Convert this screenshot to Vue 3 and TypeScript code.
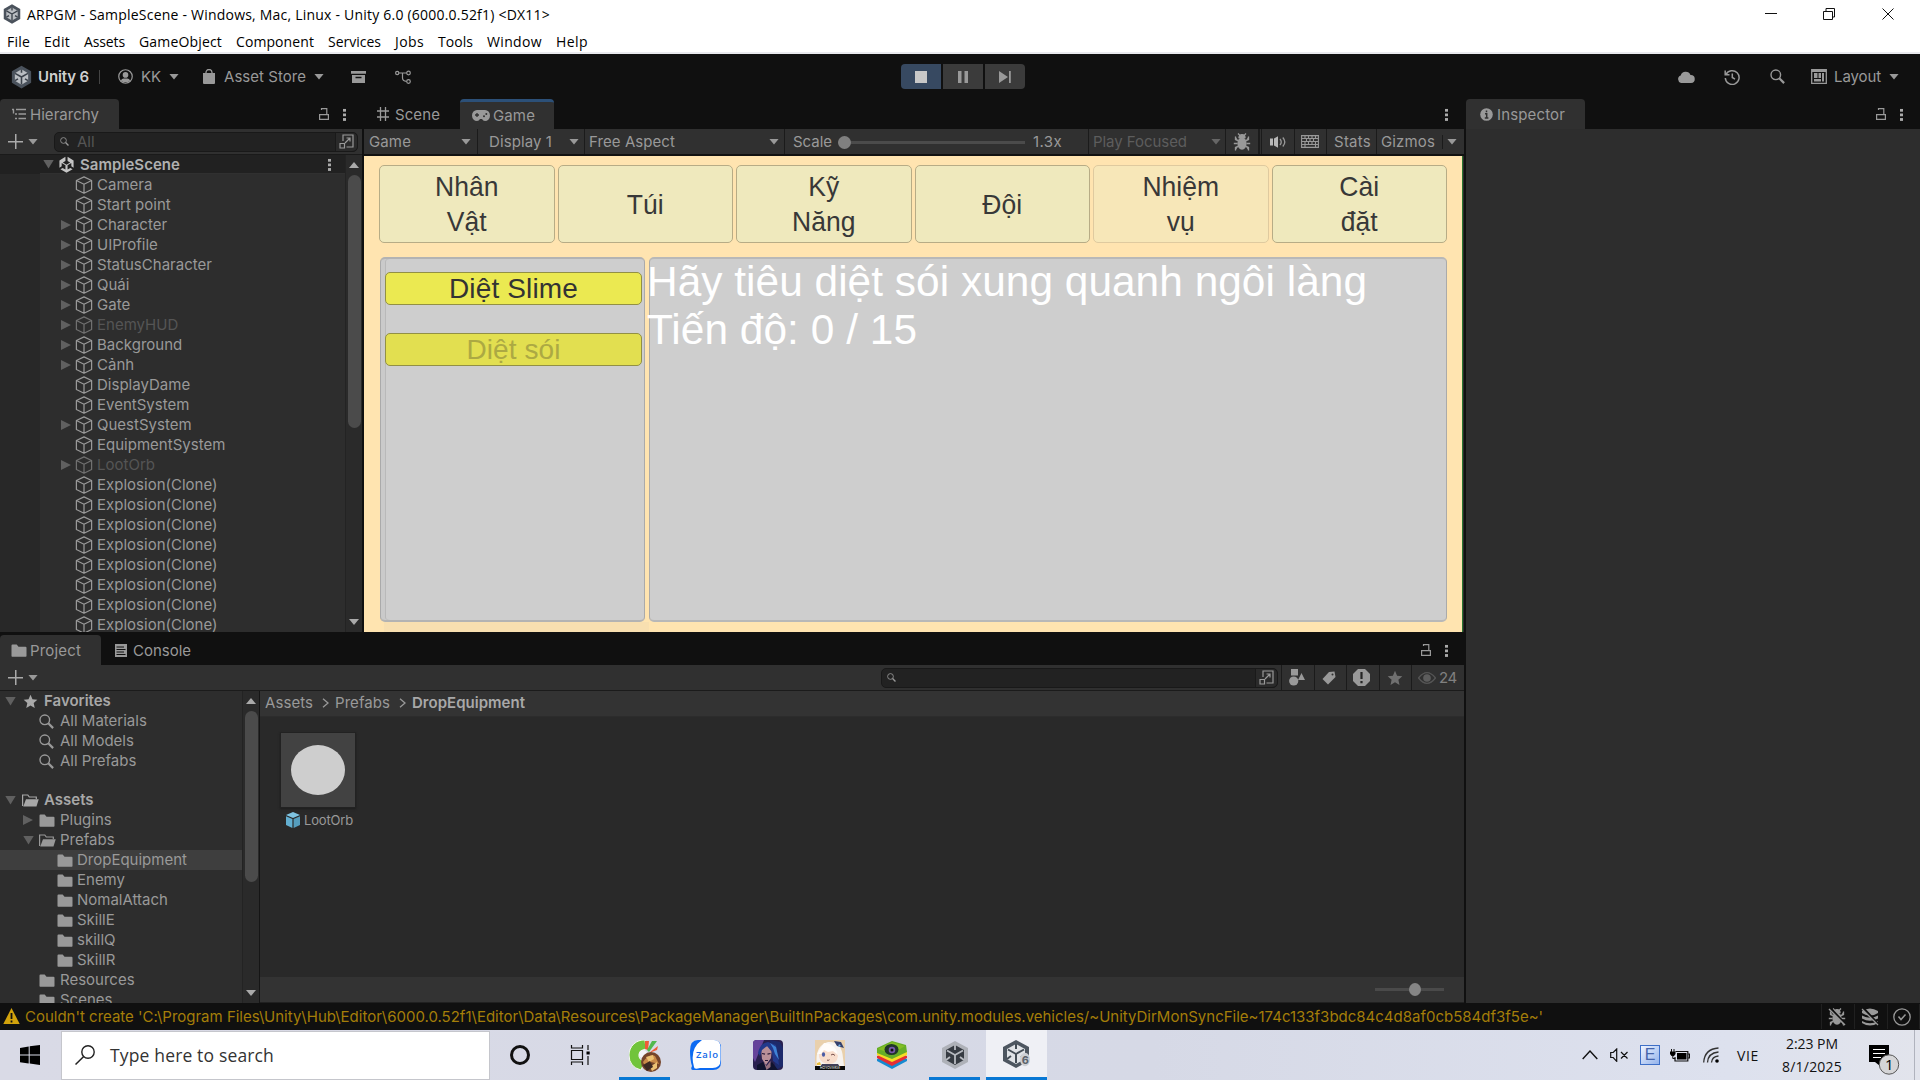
<script setup lang="ts">
import type { Directive } from 'vue'

// Tracks a label so that it occupies exactly the given width in pixels.
const vFit: Directive<HTMLElement, number> = {
  mounted(el, binding) {
    const count = (el.textContent ?? '').trim().length
    const natural = el.getBoundingClientRect().width
    el.style.letterSpacing = `${(binding.value - natural) / count}px`
    el.style.width = `${binding.value}px`
  },
}

interface MenuEntry { label: string; width: number }
const menu: MenuEntry[] = [
  { label: 'File', width: 23 }, { label: 'Edit', width: 26 }, { label: 'Assets', width: 41 },
  { label: 'GameObject', width: 83 }, { label: 'Component', width: 78 }, { label: 'Services', width: 53 },
  { label: 'Jobs', width: 29 }, { label: 'Tools', width: 35 }, { label: 'Window', width: 55 }, { label: 'Help', width: 32 },
]

interface SceneNode { name: string; fold?: boolean; off?: boolean }
const nodes: SceneNode[] = [
  { name: 'Camera' }, { name: 'Start point' }, { name: 'Character', fold: true }, { name: 'UIProfile', fold: true },
  { name: 'StatusCharacter', fold: true }, { name: 'Quái', fold: true }, { name: 'Gate', fold: true },
  { name: 'EnemyHUD', fold: true, off: true }, { name: 'Background', fold: true }, { name: 'Cảnh', fold: true },
  { name: 'DisplayDame' }, { name: 'EventSystem' }, { name: 'QuestSystem', fold: true }, { name: 'EquipmentSystem' },
  { name: 'LootOrb', fold: true, off: true },
  ...Array.from({ length: 8 }, () => ({ name: 'Explosion(Clone)' })),
]

interface GameTab { lines: string[]; active?: boolean }
const gameTabs: GameTab[] = [
  { lines: ['Nhân', 'Vật'] }, { lines: ['Túi'] }, { lines: ['Kỹ', 'Năng'] },
  { lines: ['Đội'] }, { lines: ['Nhiệm', 'vụ'], active: true }, { lines: ['Cài', 'đặt'] },
]

interface Folder { name: string; level: number; icon: string; fold?: 'open' | 'closed'; bold?: boolean; selected?: boolean }
const favorites: Folder[] = [
  { name: 'Favorites', level: 0, icon: 'star', fold: 'open', bold: true },
  { name: 'All Materials', level: 1, icon: 'search' },
  { name: 'All Models', level: 1, icon: 'search' },
  { name: 'All Prefabs', level: 1, icon: 'search' },
]
const folders: Folder[] = [
  { name: 'Assets', level: 0, icon: 'folder-open', fold: 'open', bold: true },
  { name: 'Plugins', level: 1, icon: 'folder', fold: 'closed' },
  { name: 'Prefabs', level: 1, icon: 'folder-open', fold: 'open' },
  { name: 'DropEquipment', level: 2, icon: 'folder', selected: true },
  { name: 'Enemy', level: 2, icon: 'folder' },
  { name: 'NomalAttach', level: 2, icon: 'folder' },
  { name: 'SkillE', level: 2, icon: 'folder' },
  { name: 'skillQ', level: 2, icon: 'folder' },
  { name: 'SkillR', level: 2, icon: 'folder' },
  { name: 'Resources', level: 1, icon: 'folder' },
  { name: 'Scenes', level: 1, icon: 'folder' },
]
const warning = "Couldn't create 'C:\\Program Files\\Unity\\Hub\\Editor\\6000.0.52f1\\Editor\\Data\\Resources\\PackageManager\\BuiltInPackages\\com.unity.modules.vehicles/~UnityDirMonSyncFile~174c133f3bdc84c4d8af0cb584df3f5e~'"
</script>

<template>
  <div class="screen">
    <svg class="defs" width="0" height="0">
      <symbol id="unity" viewBox="0 0 24 26">
        <path d="M12 0 23 6.4v13.2L12 26 1 19.6V6.4z" fill="#4a525c" />
        <path d="M12 4.2 19.6 8.6v8.8L12 21.8 4.4 17.4V8.6z" fill="#b9bdc2" />
        <path d="M12 13v8.5M12 13 4.6 8.8M12 13l7.4-4.2M12 4.2v4M4.6 17.2l3.4-2M19.4 17.2l-3.4-2" stroke="#3b424b" stroke-width="1.8" fill="none" />
      </symbol>
      <symbol id="scene" viewBox="0 0 24 24">
        <path d="M10.5 1.2v6L6.8 9.3l5.2 3 5.2-3-3.7-2.1v-6L22 6.3v10.2l-3.2-1.9V10L13.5 13v6.2l3.9-2.3 3.2 1.9L12 23.6l-8.6-4.8 3.2-1.9 3.9 2.3V13L5.200 10v4.600L2 16.500V6.300z" fill="#c4c4c4" />
      </symbol>
      <symbol id="cube" viewBox="0 0 18 18">
        <path d="M9 .9 16.600 4.500v9L9 17.200 1.400 13.500v-9zM1.400 4.500 9 8.200l7.600-3.700M9 8.200v9" fill="none" stroke="currentColor" stroke-width="1.250" stroke-linejoin="round" />
      </symbol>
      <symbol id="lock" viewBox="0 0 10 12">
        <path d="M.6 6.600h8.800v4.800H.6zM2.500 2V.7h5.300v5.800" fill="none" stroke="currentColor" stroke-width="1.200" />
      </symbol>
      <symbol id="search" viewBox="0 0 15 15">
        <circle cx="5.800" cy="5.800" r="4.800" fill="none" stroke="currentColor" stroke-width="1.400" />
        <path d="m9.300 9.300 4.800 4.800" stroke="currentColor" stroke-width="2.200" />
      </symbol>
      <symbol id="folder" viewBox="0 0 16 13">
        <path d="M.5 1.500Q.5.500 1.500.500h4.200L7.500 2.700h7Q15.500 2.700 15.500 3.700v8.300q0 .700-.700.700H1.200q-.700 0-.700-.700z" fill="currentColor" />
      </symbol>
      <symbol id="folder-open" viewBox="0 0 17 13">
        <path d="M.600 12V1h5.200l1.500 2h7v2" fill="none" stroke="currentColor" stroke-width="1.200" />
        <path d="M4 5.300h12.700l-2.200 7.200H1.200z" fill="currentColor" />
      </symbol>
      <symbol id="star" viewBox="0 0 16 16">
        <path d="m8 .800 2.100 4.900 5.200.5-3.900 3.500 1.100 5.200L8 12.200l-4.500 2.700 1.100-5.200L.700 6.200l5.200-.5z" fill="currentColor" />
      </symbol>
      <symbol id="expand" viewBox="0 0 15 15">
        <path d="M4 7V1h10v12H7.500" fill="none" stroke="currentColor" stroke-width="1.200" />
        <path d="M1 9.500h4.500V14H1zM6 9l5-5M7.500 4H11v3.500" fill="none" stroke="currentColor" stroke-width="1.200" />
      </symbol>
      <symbol id="bug" viewBox="0 0 18 18">
        <ellipse cx="9" cy="10.500" rx="4.600" ry="6.200" fill="currentColor" />
        <path d="M6 4.600a3 3 0 0 1 6 0zM6.500 2 5 .500M11.500 2 13 .500M5.500 8 2.500 6.500V3.500M12.500 8l3-1.500V3.500M4.500 10.500H.8M13.500 10.500h3.700M5.500 13l-3 1.500v3M12.500 13l3 1.500v3" fill="currentColor" stroke="currentColor" stroke-width="1.300" />
      </symbol>
    </svg>

    <header class="titlebar">
      <svg class="title-logo"><use href="#unity" /></svg>
      <span v-fit="523" class="title-text">ARPGM - SampleScene - Windows, Mac, Linux - Unity 6.0 (6000.0.52f1) &lt;DX11&gt;</span>
      <svg class="win-controls" viewBox="0 0 130 12">
        <path d="M0 5.500h12M58.500 3.500h9v8h-9zM61 3V.5h8.500V9H68M117.500.500l11 11M128.500.500l-11 11" fill="none" stroke="#111" />
      </svg>
    </header>
    <nav class="menubar"><span v-for="m in menu" :key="m.label" v-fit="m.width">{{ m.label }}</span></nav>

    <div class="toolbar">
      <svg class="logo"><use href="#unity" /></svg>
      <b v-fit="51" class="brand">Unity 6</b>
      <i class="rule" />
      <svg class="user" viewBox="0 0 16 16"><circle cx="8" cy="8" r="7.200" fill="none" stroke="currentColor" stroke-width="1.300" /><circle cx="8" cy="6.300" r="3" fill="currentColor" /><path d="M3 12.500q1-2.500 3-2.500h4q2 0 3 2.500-5 3.500-10 0z" fill="currentColor" /></svg>
      <span v-fit="20" class="kk">KK</span><i class="tri tri-kk" />
      <svg class="bag" viewBox="0 0 12 15"><path d="M0 4h12v10q0 1-1 1H1q-1 0-1-1z" fill="currentColor" /><path d="M3 6V3.500a3 3 0 0 1 6 0V6" fill="none" stroke="currentColor" stroke-width="1.300" /></svg>
      <span v-fit="82" class="store">Asset Store</span><i class="tri tri-store" />
      <svg class="box" viewBox="0 0 15 12"><path d="M0 0h15v2.800H0zM1 4h13v8H1z" fill="currentColor" /><path d="M4.500 6.500h6" stroke="#101010" stroke-width="1.500" /></svg>
      <svg class="branch" viewBox="0 0 16 14"><g fill="none" stroke="currentColor" stroke-width="1.200"><circle cx="2.200" cy="3" r="1.600" /><circle cx="13.500" cy="3" r="1.800" /><circle cx="13.500" cy="11.500" r="1.800" /><path d="M4 3h7.500M7.500 3v5q0 3 4 3.300" /></g></svg>
      <div class="play">
        <span class="on"><svg viewBox="0 0 12 12"><path d="M0 0h12v12H0z" fill="#c8c8c8" /></svg></span>
        <span><svg viewBox="0 0 12 12"><path d="M1 0h3.500v12H1zM7.500 0H11v12H7.500z" fill="currentColor" /></svg></span>
        <span><svg viewBox="0 0 12 12"><path d="M0 0l9 6-9 6zM10 0h1.800v12H10z" fill="currentColor" /></svg></span>
      </div>
      <svg class="cloud" viewBox="0 0 18 12"><path d="M4 12a4 4 0 0 1-.3-7.600A5.200 5.200 0 0 1 13.500 4 4 4 0 0 1 14 12z" fill="currentColor" /></svg>
      <svg class="history" viewBox="0 0 16 16"><path d="M2 5.500A6.900 6.900 0 1 1 1.300 9M1.200 1.500v4.300h4.300M8.300 4.500v4l2.700 1.600" fill="none" stroke="currentColor" stroke-width="1.500" /></svg>
      <svg class="find"><use href="#search" /></svg>
      <svg class="layout-icon" viewBox="0 0 16 15"><path d="M.7.7h14.600v13.600H.7z" fill="none" stroke="currentColor" stroke-width="1.300" /><path d="M3 4h3.500v5H3zM7.500 4h2.500v5H7.500zM11 4h2v8.500h-2zM3 10h7v2.500H3zM1 1h14v2H1z" fill="currentColor" /></svg>
      <span v-fit="47" class="layout">Layout</span><i class="tri tri-layout" />
    </div>

    <main class="workspace">
      <div class="docks">
        <div class="upper">
          <section class="hierarchy">
            <div class="tabs">
              <div class="tab tab-hier">
                <svg class="list" viewBox="0 0 14 12"><path d="M0 1.500h2M4 1.500h10M3 6h2M6.500 6H14M3 10.500h2M6.500 10.500H14M1.500 1.500v4" stroke="currentColor" stroke-width="1.400" fill="none" /></svg>
                <span v-fit="69">Hierarchy</span>
              </div>
              <svg class="lock lock-hier"><use href="#lock" /></svg><i class="kebab" />
            </div>
            <div class="panelbar">
              <i class="plus" /><i class="tri tri-plus" />
              <div class="field field-hier">
                <svg class="mini-search"><use href="#search" /></svg><span class="hint">All</span>
                <div class="field-btn"><svg><use href="#expand" /></svg></div>
              </div>
            </div>
            <div class="tree">
              <div class="gutter" />
              <div class="nodes">
                <div class="node root"><i class="arrow open" /><svg class="scene-icon"><use href="#scene" /></svg><b v-fit="100">SampleScene</b><i class="kebab root-kebab" /></div>
                <div v-for="(n, i) in nodes" :key="i" class="node" :class="{ off: n.off }">
                  <i class="arrow" :class="n.fold ? 'closed' : 'none'" /><svg class="cube-icon"><use href="#cube" /></svg><span>{{ n.name }}</span>
                </div>
              </div>
              <div class="scroll"><i class="up" /><i class="thumb thumb-hier" /><i class="down" /></div>
            </div>
          </section>

          <section class="game">
            <div class="tabs">
              <svg class="hash" viewBox="0 0 12 14"><path d="M3.500 0v14M8.500 0v14M0 4h12M0 10h12" stroke="currentColor" stroke-width="1.300" /></svg>
              <span v-fit="45" class="scene-label">Scene</span>
              <div class="tab tab-game">
                <svg class="pad" viewBox="0 0 18 11"><path d="M5 0h8a5 5.500 0 0 1 0 11q-2 0-3-2H8q-1 2-3 2A5 5.500 0 0 1 5 0z" fill="currentColor" /><path d="M3 5h4M5 3v4" stroke="#303030" stroke-width="1.300" /><circle cx="12" cy="6.300" r="1" fill="#303030" /><circle cx="14.300" cy="4" r="1" fill="#303030" /></svg>
                <span v-fit="42">Game</span>
              </div>
              <i class="kebab kebab-game" />
            </div>
            <div class="gamebar">
              <div class="cell c-game"><span v-fit="42">Game</span><i class="tri" /></div>
              <div class="cell c-display"><span v-fit="63">Display 1</span><i class="tri" /></div>
              <div class="cell c-aspect"><span v-fit="86">Free Aspect</span><i class="tri" /></div>
              <div class="cell c-scale"><span v-fit="39">Scale</span><div class="slider"><i /></div><span v-fit="29">1.3x</span></div>
              <div class="cell c-focus"><span v-fit="94">Play Focused</span><i class="tri" /></div>
              <div class="cell c-bug"><svg><use href="#bug" /></svg></div>
              <div class="cell c-sound"><svg viewBox="0 0 17 12"><path d="M0 2.500h3v7H0zM4 2.500 8 .3v11.400L4 9.500z" fill="#b8b8b8" /><path d="M10 3q2.500 3 0 6M12.800 1.500q4 4.500 0 9" fill="none" stroke="currentColor" stroke-width="1.300" /></svg></div>
              <div class="cell c-keys"><svg viewBox="0 0 18 13"><path d="M.6.6h16.800v11.800H.6zM.6 3.500h16.800M.6 6.500h16.800M.6 9.500h16.800M4 .6v3M7.500.6v3M11 .6v3M14.500.6v3M5.500 3.500v3M9 3.500v3M12.500 3.500v3M4 6.500v6M7.500 6.500v3M11 6.500v3M14.500 6.500v6" fill="none" stroke="currentColor" stroke-width="1.100" /></svg></div>
              <div class="cell c-stats"><span v-fit="37">Stats</span></div>
              <div class="cell c-gizmos"><span v-fit="54">Gizmos</span><i class="rule" /><i class="tri" /></div>
            </div>
            <div class="viewport">
              <div class="game-tabs">
                <div v-for="t in gameTabs" :key="t.lines[0]" class="game-btn" :class="{ active: t.active }">
                  <span v-for="l in t.lines" :key="l">{{ l }}</span>
                </div>
              </div>
              <div class="game-body">
                <div class="quests">
                  <div class="quest"><span v-fit="129">Diệt Slime</span></div>
                  <div class="quest dim"><span v-fit="94">Diệt sói</span></div>
                </div>
                <div class="detail">
                  <span v-fit="720">Hãy tiêu diệt sói xung quanh ngôi làng</span>
                  <span v-fit="270">Tiến độ: 0 / 15</span>
                </div>
              </div>
              <div class="strip" />
            </div>
          </section>
        </div>

        <section class="project">
          <div class="tabs tabs-project">
            <div class="tab tab-project"><svg class="fold"><use href="#folder" /></svg><span v-fit="51">Project</span></div>
            <svg class="console-icon" viewBox="0 0 12 13"><path d="M0 0h12v13H0z" fill="currentColor" /><path d="M1.500 3H9M1.500 5.500h9M1.500 8H9M1.500 10.500h9" stroke="#101010" stroke-width="1.100" /></svg>
            <span v-fit="58" class="console-label">Console</span>
            <svg class="lock lock-project"><use href="#lock" /></svg><i class="kebab" />
          </div>
          <div class="projectbar">
            <i class="plus" /><i class="tri tri-plus" />
            <div class="field field-project"><svg class="mini-search"><use href="#search" /></svg><div class="field-btn"><svg><use href="#expand" /></svg></div></div>
            <div class="tool t1"><svg viewBox="0 0 16 17"><path d="M2 0h7v6.500H2zM12.500 4 16 11H9z" fill="currentColor" /><circle cx="4.700" cy="12" r="4.600" fill="currentColor" /></svg></div>
            <div class="tool t2"><svg viewBox="0 0 14 14"><path d="M7 1 12.500.500 13.500 6 6 13.500.500 8z" fill="currentColor" /><circle cx="10.500" cy="3.500" r="1" fill="#303030" /></svg></div>
            <div class="tool t3"><svg viewBox="0 0 17 17"><path d="M5 0h7l5 5v7l-5 5H5l-5-5V5z" fill="currentColor" /><path d="M8.500 3v7M8.500 12v2.200" stroke="#252525" stroke-width="2.200" /></svg></div>
            <div class="tool t4"><svg><use href="#star" /></svg></div>
            <div class="tool t5"><svg viewBox="0 0 17 11"><path d="M.5 5.500q8-10 16 0-8 10-16 0z" fill="none" stroke="#555" stroke-width="1.200" /><circle cx="8.500" cy="5.500" r="3.600" fill="#5d5d5d" /></svg><span v-fit="18">24</span></div>
          </div>
          <div class="project-body">
            <div class="folders">
              <div v-for="f in favorites" :key="f.name" class="folder" :class="[`lv${f.level}`, { bold: f.bold }]">
                <i class="arrow" :class="f.fold ?? 'none'" /><svg :class="`ic-${f.icon}`"><use :href="`#${f.icon}`" /></svg><span>{{ f.name }}</span>
              </div>
              <div class="folder-gap" />
              <div v-for="f in folders" :key="f.name" class="folder" :class="[`lv${f.level}`, { bold: f.bold, selected: f.selected }]">
                <i class="arrow" :class="f.fold ?? 'none'" /><svg :class="`ic-${f.icon}`"><use :href="`#${f.icon}`" /></svg><span>{{ f.name }}</span>
              </div>
            </div>
            <div class="scroll"><i class="up" /><i class="thumb thumb-project" /><i class="down" /></div>
            <div class="content">
              <div class="crumbs">
                <span v-fit="48">Assets</span><svg viewBox="0 0 7 10"><path d="m1 .8 5 4.200-5 4.200" fill="none" stroke="currentColor" stroke-width="1.300" /></svg>
                <span v-fit="55">Prefabs</span><svg viewBox="0 0 7 10"><path d="m1 .8 5 4.200-5 4.200" fill="none" stroke="currentColor" stroke-width="1.300" /></svg>
                <b v-fit="113">DropEquipment</b>
              </div>
              <div class="assets">
                <div class="asset">
                  <div class="thumb-box"><i /></div>
                  <div class="asset-name">
                    <svg viewBox="0 0 14 16"><path d="M7 0 14 3 7 6 0 3z" fill="#7fc4e2" /><path d="M0 4.200 6.400 7v9L0 13z" fill="#62aed0" /><path d="M14 4.200 7.600 7v9L14 13z" fill="#559dbd" /></svg>
                    <span v-fit="49">LootOrb</span>
                  </div>
                </div>
              </div>
              <div class="zoombar"><div><i /></div></div>
            </div>
          </div>
        </section>
      </div>

      <aside class="inspector">
        <div class="tabs">
          <div class="tab tab-insp"><svg viewBox="0 0 13 13"><circle cx="6.500" cy="6.500" r="6.300" fill="currentColor" /><path d="M6.500 2.500v1.800M5 5.800h1.700v3.700M4.800 9.900h3.600" stroke="#303030" stroke-width="1.500" fill="none" /></svg><span v-fit="68">Inspector</span></div>
          <svg class="lock lock-insp"><use href="#lock" /></svg><i class="kebab" />
        </div>
      </aside>
    </main>

    <footer class="status">
      <svg class="warn" viewBox="0 0 17 17"><path d="M8.500.500 16.700 16.500H.3z" fill="#d3a30c" /><path d="M8.500 5.500v6M8.500 13v2" stroke="#111" stroke-width="1.800" /></svg>
      <span v-fit="1519" class="warning">{{ warning }}</span>
      <div class="st s1"><svg viewBox="0 0 18 18"><use href="#bug" /><path d="M2 0l16 17" stroke="#101010" stroke-width="2.500" /><path d="M1 1l16 16" stroke="currentColor" stroke-width="1.400" /></svg></div>
      <div class="st s2"><svg viewBox="0 0 18 18"><path d="M1 3q8-5 16 0v2q-8 5-16 0zM1 7.500q8 4.500 16 0v3q-8 4.500-16 0zM1 13q8 4.500 16 0v2q-8 5-16 0z" fill="currentColor" /><path d="M2 0l16 17" stroke="#101010" stroke-width="2.500" /><path d="M1 1l16 16" stroke="currentColor" stroke-width="1.300" /></svg></div>
      <div class="st s3"><svg viewBox="0 0 18 18"><circle cx="9" cy="9" r="8.200" fill="none" stroke="currentColor" stroke-width="1.300" /><path d="m5.500 8.500 2.500 3 4.500-5" fill="none" stroke="currentColor" stroke-width="1.500" /></svg></div>
    </footer>

    <div class="taskbar">
      <svg class="start" viewBox="0 0 20 20"><path d="M0 3 8.700 1.500v8H0zM9.700 1.300 20 0v9.500H9.700zM0 10.500h8.700v8L0 17.300zM9.700 10.500H20V20L9.700 18.600z" /></svg>
      <div class="searchbox">
        <svg viewBox="0 0 20 20"><circle cx="13" cy="7" r="6.200" fill="none" stroke="#222" stroke-width="1.400" /><path d="M8.700 11.500.500 19.500" stroke="#222" stroke-width="1.500" /></svg>
        <span v-fit="164">Type here to search</span>
      </div>
      <i class="cortana" />
      <svg class="taskview" viewBox="0 0 20 20"><path d="M1.500 5.500h11v9h-11zM1.500 0v3h11V0M1.500 20v-3h11v3M18 0v5M18 11v9" fill="none" stroke="#111" stroke-width="1.200" /><path d="M16.500 6.500h3.200v3h-3.200z" /></svg>
      <div class="app a1"><svg viewBox="0 0 32 32">
        <path d="M16 0A15 15 0 0 0 0 15q0 12 12 15l4-9q-7-1-6-7 1-4 7-5z" fill="#71c43b" stroke="#f5f7f1" stroke-width="1" />
        <path d="M16 1h4l-1 9-3-1z" fill="#ef5d35" /><path d="M23 1h5l-8 11-2-2z" fill="#51b94e" /><path d="M29 6l-1 4-8 3z" fill="#ef5d35" />
        <circle cx="14" cy="14" r="4" fill="#f4f5f8" /><circle cx="22" cy="22" r="10" fill="#75452b" /><path d="M14 22q6-9 12-6l4 8-8-2-5 7z" fill="#c98b48" /><path d="M17 17l7-2 1 4-5 3zM21 27l7-5v6l-5 3z" fill="#ecc274" /><path d="m14 25 7-4 3 6-6 4z" fill="#3c2923" />
      </svg></div>
      <div class="app a2"><svg viewBox="0 0 31 31"><path d="M8 0h15q8 0 8 8v14q0 8-8 8H3q-3 0-1-4Q0 20 0 11 0 0 8 0z" fill="#0c6af2" /><path d="M12 0h12q6 0 6.500 7v13q0 8-8 8H10q-6 2-6-1Q-1 9 12 0z" fill="#fff" /><text x="6" y="17.500" font-family="Open Sans, sans-serif" font-weight="600" font-size="9.500" textLength="22" fill="#1168e8">Zalo</text></svg></div>
      <div class="app a3"><svg viewBox="0 0 30 30"><rect width="30" height="30" rx="4" fill="#29204f" /><path d="M0 3q0-3 4-3h7L2 22l-2-4z" fill="#65439a" /><path d="M17 0l10 2 3 6v18l-7 4z" fill="#1d2a6b" /><path d="M8 9q6-5 11-2l-1 11-5 7-4-6z" fill="#b98f98" /><path d="M5 13Q7 3 15 2l8 3 3 20-6-4-1-9-5-6-5 4-2 6z" fill="#22398c" /><path d="m17 3 6 4 3 13-4-6-2-6z" fill="#3f83d6" /><path d="M9 13.500l3 .7M14.500 14.200l3-.7M12 20.500h3" stroke="#2b1a38" stroke-width="1.200" /><path d="m4 25 6-3 3 5 6-5 6 8H4z" fill="#10132e" /><path d="M10.500 21l3 5 4-5v6l-4 3z" fill="#96717f" /></svg></div>
      <div class="app a4"><svg viewBox="0 0 30 30"><path d="M0 0h30v30H0z" fill="#e9d0ac" /><path d="M2 26Q-1 6 13 2q14-1 15 16l1 8z" fill="#f7f3f0" /><path d="M4 12Q8 7 15 8t8 8q-1 8-9 8T4 17z" fill="#f8ddcc" /><path d="M2 14 9 3q11 0 14 12l-5-4-5 1-4-2-3 4z" fill="#fffcf9" /><path d="M19 1l7 1 3 6-7-2z" fill="#34406d" /><path d="M24 4l2 2-3 1z" fill="#7bb6e4" /><ellipse cx="8.500" cy="14.500" rx="1.600" ry="2.300" fill="#4a5ca5" /><path d="M16 15q2-2 4 .5M12 20q1 1 2.500-.3" stroke="#77504d" fill="none" /><path d="M7 24h16l2 3H5z" fill="#414058" /><path d="M2 23l3-1 1 3H2z" fill="#e9be3b" /><path d="M0 26h30v4H0z" fill="#090909" /><text x="5" y="29" font-size="3.200" font-family="Lato, sans-serif" fill="#fff" textLength="20">HOYOVERSE</text></svg></div>
      <div class="app a5"><svg viewBox="0 0 30 28"><path d="M0 18 15 12l15 6v2L15 28 0 20z" fill="#168ad1" /><path d="M0 15 15 9l15 6v2L15 25 0 17z" fill="#e52f35" /><path d="M0 12 15 6l15 5v3L15 21 0 14z" fill="#f5dd24" /><path d="M0 7 15 0l14 4 1 7-15 7L0 12z" fill="#67af26" /><path d="M1 8 15 1l13 4-13 8z" fill="#82bd25" /><ellipse cx="14.500" cy="8.500" rx="7" ry="5.500" fill="#213629" /><circle cx="15" cy="9" r="3.300" fill="#7559a9" /><circle cx="15" cy="9" r="1.500" fill="#111" /></svg></div>
      <div class="app a6"><svg viewBox="0 0 26 28"><path d="M13 0 26 7v14l-13 7L0 21V7z" fill="#aeb1b8" /><path d="M13 4 22 9v10l-9 5-9-5V9z" fill="#363b42" /><path d="M13 14v9M13 14 5 9.500M13 14l8-4.500M13 4v5M4 19l4-3M22 19l-4-3" stroke="#b7bac0" stroke-width="1.800" /></svg></div>
      <div class="app a7"><svg viewBox="0 0 27 28"><path d="M13 0 26 7v14l-13 7L0 21V7z" fill="#4d5660" /><path d="M13 4 22 9v10l-9 5-9-5V9z" fill="#e0e3e7" /><path d="M13 14v9M13 14 5 9.500M13 14l8-4.500M13 4v5M4 19l4-3M22 19l-4-3" stroke="#444d56" stroke-width="2" /><ellipse cx="22" cy="19.500" rx="5" ry="6.800" fill="#cdd0d5" /><text x="18.700" y="23.500" font-size="11" font-weight="700" font-family="Inter, sans-serif" fill="#5c636c">6</text></svg></div>

      <svg class="chev" viewBox="0 0 16 10"><path d="m.7 9 7.300-8 7.300 8" fill="none" stroke="#111" stroke-width="1.400" /></svg>
      <svg class="mute" viewBox="0 0 19 14"><path d="M.7 4.500h2.500L6.700 1v12.300L3.200 9.500H.7zM11 4l6.500 6.500M17.500 4 11 10.500" fill="none" stroke="#111" stroke-width="1.200" /></svg>
      <div class="ime">E</div>
      <svg class="battery" viewBox="0 0 20 13"><path d="M5.500 2.500h12.300V12H5v-4M18 5h1.500v4H18" fill="none" stroke="#111" stroke-width="1.200" /><path d="M7 4h9.500v6.500H7zM0 2.500h5.500v2.500L4 7H1.500L0 5z" /><path d="M1.500 0v3M4 0v3M2.800 6v3.500h2.500" fill="none" stroke="#111" /></svg>
      <svg class="wifi" viewBox="0 0 16 16"><path d="M.7 15.500Q1.500 2 15.500 1M4.500 15.500Q5 6 15.500 5M8.500 15.500Q9 9.500 15.500 9" fill="none" stroke="#333" stroke-width="1.300" /><circle cx="14" cy="14" r="1.800" /></svg>
      <span v-fit="22" class="lang">VIE</span>
      <div class="clock"><span v-fit="52">2:23 PM</span><span v-fit="60">8/1/2025</span></div>
      <svg class="notes" viewBox="0 0 32 31"><path d="M0 0h20v17h-9v4l-5-4H0z" /><path d="M4 4.500h12M4 8.500h12M4 12.500h8" stroke="#fff" stroke-width="1.200" /><circle cx="20" cy="19.500" r="9.700" fill="#d5d5d7" stroke="#555" /><text x="16" y="25" font-family="Open Sans, sans-serif" font-size="15">1</text></svg>
      <i class="peek" />
    </div>
  </div>
</template>

<style>
body { margin: 0; overflow: hidden; }
</style>

<style scoped>
.screen { width: 1920px; height: 1080px; overflow: hidden; background: #101010; color: #999; font: 15px/20px Inter, sans-serif; display: flex; flex-direction: column; }
.screen * { box-sizing: border-box; flex-shrink: 0; }
.defs { position: absolute; }
svg { display: block; }
i { font-style: normal; display: block; }
span, b { white-space: pre; }
b { font-weight: 600; }
.titlebar { height: 28px; background: #fff; display: flex; align-items: center; color: #000; font: 14px/20px "Open Sans", sans-serif; }
.title-logo { width: 18px; height: 20px; margin-left: 3px; }
.title-text { margin-left: 6px; padding-top: 1px; }
.win-controls { width: 130px; height: 12px; margin-left: 1215px; }
.menubar { height: 26px; background: #fff; border-bottom: 2px solid #e9eaee; display: flex; align-items: center; gap: 14px; padding: 3px 0 0 7px; color: #000; font: 14px/20px "Open Sans", sans-serif; }
.toolbar { height: 45px; display: flex; align-items: center; color: #999; }
.logo { width: 21px; height: 24px; margin-left: 11px; }
.brand { margin-left: 6px; padding-top: 1px; color: #cfcfcf; }
.rule { width: 1px; height: 14px; margin-left: 10px; background: #444; }
.user { width: 15px; height: 15px; margin-left: 18px; }
.kk { margin-left: 8px; padding-top: 1px; }
.tri { width: 10px; height: 6px; background: #999; clip-path: polygon(0 0, 100% 0, 50% 100%); }
.tri-kk { margin-left: 8px; }
.bag { width: 12px; height: 15px; margin-left: 24px; }
.store { margin-left: 9px; padding-top: 1px; }
.tri-store { margin-left: 8px; }
.box { width: 15px; height: 12px; margin-left: 27px; }
.branch { width: 16px; height: 14px; margin-left: 29px; }
.play { display: flex; gap: 2px; margin-left: 490px; }
.play span { width: 40px; height: 25px; background: #3b3b3b; display: flex; align-items: center; justify-content: center; }
.play span:first-child { border-radius: 4px 0 0 4px; }
.play span:last-child { border-radius: 0 4px 4px 0; }
.play .on { background: #374961; }
.play svg { width: 12px; height: 12px; }
.cloud { width: 18px; height: 12px; margin-left: 652px; }
.history { width: 16px; height: 16px; margin-left: 29px; }
.find { width: 15px; height: 15px; margin-left: 30px; }
.layout-icon { width: 16px; height: 15px; margin-left: 26px; }
.layout { margin-left: 7px; padding-top: 1px; }
.tri-layout { margin-left: 8px; }

.workspace { height: 904px; display: flex; gap: 2px; }
.docks { width: 1464px; display: flex; flex-direction: column; }
.upper { height: 534px; display: flex; gap: 2px; }
.hierarchy { width: 362px; height: 533px; background: #2d2d2d; display: flex; flex-direction: column; overflow: hidden; }
.tabs { height: 30px; background: #101010; display: flex; align-items: center; }
.tab { height: 30px; background: #303030; border-radius: 4px 4px 0 0; display: flex; align-items: center; }
.tab span, .scene-label, .console-label { padding-top: 2px; }
.tab-hier { width: 119px; padding-left: 12px; gap: 4px; }
.list { width: 14px; height: 12px; }
.lock { width: 10px; height: 12px; }
.lock-hier { margin-left: 200px; }
.kebab { width: 3px; height: 13px; margin-left: 14px; background: radial-gradient(circle, #aaa 1.400px, transparent 1.700px) 0 0 / 3px 4.600px; }
.panelbar { height: 25px; background: #303030; display: flex; align-items: center; }
.plus { width: 15px; height: 15px; margin-left: 8px; background: linear-gradient(#aaa, #aaa) 50% / 15px 1.500px no-repeat, linear-gradient(#aaa, #aaa) 50% / 1.500px 15px no-repeat; }
.tri-plus { margin-left: 5px; }
.field { height: 20px; background: #222; border: 1px solid #191919; border-radius: 5px; display: flex; align-items: center; }
.field-hier { width: 304px; margin-left: 16px; }
.mini-search { width: 9px; height: 9px; margin-left: 5px; }
.hint { margin-left: 8px; padding-top: 1px; color: #555; }
.field-btn { width: 22px; height: 18px; margin-left: auto; border-left: 1px solid #1a1a1a; background: #2a2a2a; border-radius: 0 5px 5px 0; padding: 1px 3px; }
.field-btn svg { width: 15px; height: 15px; }
.tree { height: 478px; border-top: 1px solid #1a1a1a; display: flex; overflow: hidden; background: #2d2d2d; }
.gutter { width: 40px; background: #282828; border-top: 19px solid #212121; }
.nodes { width: 305px; }
.node { height: 20px; display: flex; align-items: center; padding-left: 21px; }
.node span { margin-left: 4px; letter-spacing: .01px; }
.root { height: 19px; background: #212121; padding-left: 3px; color: #b0b0b0; border-bottom: 1px solid #303030; margin-bottom: 1px; }
.root b { padding-top: 1px; }
.arrow { background: #606060; }
.arrow.closed { width: 10px; height: 10px; clip-path: polygon(0 0, 100% 50%, 0 100%); }
.arrow.open { width: 11px; height: 9px; clip-path: polygon(0 0, 100% 0, 50% 100%); }
.arrow.none { width: 10px; background: none; }
.scene-icon { width: 17px; height: 17px; margin: 0 5px 0 4px; }
.root-kebab { margin-left: 148px; }
.cube-icon { width: 18px; height: 18px; margin-left: 4px; }
.off { color: #555; }
.off .cube-icon { color: #707070; }
.scroll { width: 17px; background: #2a2a2a; border-left: 1px solid #232323; display: flex; flex-direction: column; align-items: center; }
.up { width: 10px; height: 6px; margin-top: 7px; background: #aaa; clip-path: polygon(50% 0, 100% 100%, 0 100%); }
.thumb { width: 13px; margin-top: 7px; border-radius: 7px; background: #4b4b4b; }
.thumb-hier { height: 253px; }
.down { width: 10px; height: 6px; margin-top: auto; margin-bottom: 7px; background: #aaa; clip-path: polygon(0 0, 100% 0, 50% 100%); }

.game { width: 1100px; }
.hash { width: 12px; height: 14px; margin-left: 13px; }
.scene-label { margin-left: 6px; }
.tab-game { width: 94px; margin-left: 20px; border-top: 3px solid #2c5078; padding: 0 0 1px 12px; gap: 3px; }
.tab-game span { padding-top: 1px; }
.pad { width: 18px; height: 11px; }
.kebab-game { margin-left: 891px; }
.gamebar { height: 25px; background: #303030; display: flex; }
.cell { height: 25px; border-right: 1px solid #1b1b1b; display: flex; align-items: center; }
.cell span { padding-top: 1px; }
.c-game { width: 114px; padding-left: 5px; gap: 50px; }
.c-display { width: 107px; padding-left: 11px; gap: 17px; }
.c-aspect { width: 200px; padding-left: 4px; gap: 94px; }
.c-scale { width: 304px; padding-left: 8px; }
.slider { width: 187px; height: 3px; margin: 1px 8px 0 6px; background: #4b4b4b; display: flex; align-items: center; }
.slider i { width: 13px; height: 13px; border-radius: 50%; background: #808080; }
.c-focus { width: 137px; padding-left: 4px; gap: 24px; color: #5d5d5d; }
.c-focus .tri { background: #666; }
.c-bug { width: 33px; justify-content: center; padding-right: 1px; }
.c-bug svg { width: 18px; height: 18px; }
.c-sound { width: 36px; padding-left: 8px; border-left: 3px double #1b1b1b; }
.c-sound svg { width: 17px; height: 12px; }
.c-keys { width: 32px; justify-content: center; padding-right: 2px; }
.c-keys svg { width: 18px; height: 13px; }
.c-stats { width: 50px; padding-left: 7px; }
.c-gizmos { width: 87px; padding-left: 4px; border: 0; }
.c-gizmos .rule { background: #1b1b1b; margin-left: 7px; }
.c-gizmos .tri { margin-left: 4px; }
.viewport { height: 479px; border: solid #111; border-width: 2px 0 1px; background: linear-gradient(90deg, transparent 1098px, #28742d 1098px, #28742d 1099px, #2b2b2b 1099px), #ffe4b0; font-family: "Liberation Sans", sans-serif; }
.game-tabs { display: flex; gap: 3px; padding: 9px 0 0 15px; }
.game-btn { width: 175.500px; height: 78px; border: 1px solid #b7ac86; border-radius: 5px; background: #efe9bd; color: #383838; font-size: 26.500px; line-height: 35px; display: flex; flex-direction: column; align-items: center; justify-content: center; }
.game-btn span { transform: scaleY(1.060); }
.game-btn.active { background: #f7e7b8; border-color: #dfca9f; }
.game-body { display: flex; gap: 4px; padding: 14px 0 0 16px; }
.quests { width: 265px; height: 365px; background: #cecece; border: 1px solid #aaa; border-top: 2px solid #b3b3b3; border-bottom: 2px solid #b3b3b3; border-radius: 5px; padding: 13px 3px 0 4px; box-shadow: inset 4px 0 #cacaca, inset 5px 0 #b9b9b9; }
.quest { width: 257px; height: 33px; border: 1px solid #929044; border-radius: 5px; background: #ebe951; color: #333; font-size: 28px; line-height: 32px; display: flex; justify-content: center; margin-bottom: 28px; }
.quest.dim { background: #e2df50; color: #aca943; }
.detail { width: 798px; height: 365px; background: #cecece; border: 1px solid #aaa; border-top: 2px solid #b8b8b8; border-bottom: 2px solid #b8b8b8; border-radius: 5px; color: #fff; font-size: 42.400px; line-height: 48.400px; display: flex; flex-direction: column; align-items: flex-start; }
.detail span { margin-left: -3px; }
.detail span:first-child { margin-top: -1px; }
.strip { width: 265px; height: 10px; margin: 0 0 0 20px; background: #f8dfb0; }

.project { height: 370px; display: flex; flex-direction: column; }
.tabs-project { height: 32px; padding-top: 2px; }
.tab-project { width: 101px; padding-left: 11px; gap: 3px; }
.fold { width: 16px; height: 13px; }
.console-icon { width: 12px; height: 13px; margin-left: 14px; }
.console-label { margin-left: 6px; }
.lock-project { margin-left: 1230px; }
.projectbar { height: 26px; background: #303030; border-bottom: 1px solid #1b1b1b; display: flex; align-items: center; }
.field-project { width: 397px; margin-left: 843px; }
.tool { height: 25px; border-left: 1px solid #1b1b1b; display: flex; align-items: center; }
.t1 { margin-left: 3px; width: 33px; padding-left: 7px; }
.t1 svg { width: 16px; height: 17px; }
.t2 { width: 32px; padding-left: 7px; }
.t2 svg { width: 14px; height: 14px; }
.t3 { width: 33px; padding-left: 6px; }
.t3 svg { width: 17px; height: 17px; }
.t4 { width: 32px; padding-left: 7px; color: #707070; }
.t4 svg { width: 16px; height: 16px; }
.t5 { width: 53px; padding-left: 6px; gap: 3px; color: #808080; }
.t5 svg { width: 18px; height: 12px; }
.t5 span { padding-top: 1px; }
.project-body { height: 312px; display: flex; overflow: hidden; background: #2d2d2d; }
.folders { width: 242px; height: 312px; overflow: hidden; }
.folder { height: 20px; display: flex; align-items: center; }
.folder.bold { font-weight: 600; color: #a8a8a8; }
.folder-gap { height: 19px; }
.selected { background: #3e3e3e; }
.lv0 { padding-left: 5px; }
.lv1 { padding-left: 23px; }
.lv2 { padding-left: 41px; }
.folder svg { margin-left: 6px; }
.folder span { margin-left: 5px; }
.lv2 span { margin-left: 4px; }
.ic-search { width: 15px; height: 15px; margin-right: 1px; }
.ic-star { width: 15px; height: 15px; margin-right: 1px; }
.folder svg.ic-star { margin-left: 7px; }
.ic-folder { width: 16px; height: 13px; }
.ic-folder-open { width: 17px; height: 13px; }
.lv1 .open + svg { margin-left: 5px; }
.lv1 .open ~ span { margin-left: 4px; }
.thumb-project { height: 171px; }
.content { width: 1205px; border-left: 1px solid #151515; background: #292929; display: flex; flex-direction: column; }
.crumbs { height: 26px; background: #333; display: flex; align-items: center; padding: 0 0 1px 5px; border-bottom: 1px solid #2c2c2c; }
.crumbs svg { width: 7px; height: 10px; margin: 0 6px 0 9px; }
.crumbs b { color: #a8a8a8; }
.assets { height: 260px; padding: 15px 0 0 20px; }
.asset { width: 76px; display: flex; flex-direction: column; align-items: center; }
.thumb-box { width: 76px; height: 76px; border: 1px solid #222; background: #424242; display: flex; align-items: center; justify-content: center; box-shadow: 0 1px 2px #1c1c1c; }
.thumb-box i { width: 54px; height: 50px; border-radius: 50%; background: #cecece; }
.asset-name { display: flex; align-items: center; gap: 4px; margin-top: 2px; padding-left: 3px; font-size: 13px; }
.asset-name svg { width: 14px; height: 16px; }
.zoombar { height: 26px; background: #333; padding: 11px 0 0 1115px; border-bottom: 1px solid #202020; }
.zoombar div { width: 69px; height: 3px; background: #4a4a4a; display: flex; align-items: center; }
.zoombar i { width: 12px; height: 13px; margin-left: 34px; border-radius: 50%; background: #858585; }
.inspector { width: 454px; height: 904px; background: #2d2d2d; }
.tab-insp { width: 119px; padding-left: 14px; gap: 4px; }
.tab-insp svg { width: 13px; height: 13px; }
.lock-insp { margin-left: 291px; }

.status { height: 27px; background: #101010; display: flex; align-items: center; color: #a47e09; }
.warn { width: 17px; height: 18px; margin: 0 0 2px 3px; }
.warning { margin-left: 5px; padding-top: 1px; }
.st { height: 25px; border-left: 1px solid #202020; display: flex; align-items: center; color: #999; padding-left: 6px; }
.st svg { width: 18px; height: 18px; }
.s1 { width: 33px; margin-left: 277px; }
.s2 { width: 33px; }
.s3 { width: 33px; padding-left: 5px; border-right: 1px solid #202020; }
.taskbar { height: 50px; background: linear-gradient(90deg, #d9dae6, #d6d9e6 60%, #dde1ee 90%, #e2e4ec); display: flex; align-items: center; color: #111; font: 14px/23px "Open Sans", sans-serif; }
.start { width: 20px; height: 20px; margin-left: 20px; }
.searchbox { width: 429px; height: 49px; margin-left: 21px; background: #fff; border: 1px solid #c5c6cc; display: flex; align-items: center; font-size: 17.500px; color: #333; }
.searchbox svg { width: 20px; height: 20px; margin-left: 13px; }
.searchbox span { margin-left: 15px; }
.cortana { width: 20px; height: 20px; margin-left: 20px; border: 3px solid #111; border-radius: 50%; }
.taskview { width: 20px; height: 20px; margin-left: 40px; }
.app { height: 50px; display: flex; align-items: center; justify-content: center; }
.a1 { width: 51px; margin-left: 29px; border-bottom: 3px solid #0878d4; padding-top: 5px; }
.a1 svg { width: 32px; height: 32px; }
.a2 { margin-left: 20px; }
.a2 svg { width: 31px; height: 31px; }
.a3 { margin-left: 32px; }
.a3 svg, .a4 svg { width: 30px; height: 30px; }
.a4 { margin-left: 32px; }
.a5 { margin-left: 32px; }
.a5 svg { width: 30px; height: 28px; }
.a6 { width: 51px; margin-left: 22px; border-bottom: 3px solid #0878d4; padding-top: 3px; }
.a6 svg { width: 26px; height: 28px; }
.a7 { width: 61px; margin-left: 6px; background: #eff0f5; border-bottom: 3px solid #0878d4; padding-top: 1px; }
.a7 svg { width: 27px; height: 28px; }
.chev { width: 16px; height: 10px; margin-left: 535px; }
.mute { width: 19px; height: 14px; margin-left: 12px; }
.ime { width: 20px; height: 20px; margin-left: 11px; border: 1px solid #3e6fc7; background: linear-gradient(135deg, #eef4ff, #94b3eb); color: #4564aa; font: 16px/18px "Liberation Sans", sans-serif; text-align: center; }
.battery { width: 20px; height: 13px; margin-left: 10px; }
.wifi { width: 16px; height: 16px; margin-left: 13px; }
.lang { margin-left: 18px; }
.clock { width: 60px; margin-left: 23px; display: flex; flex-direction: column; align-items: center; }
.notes { width: 32px; height: 31px; margin: 10px 0 0 27px; }
.peek { width: 1px; height: 50px; margin-left: 13px; background: #b0b3bd; }
</style>
